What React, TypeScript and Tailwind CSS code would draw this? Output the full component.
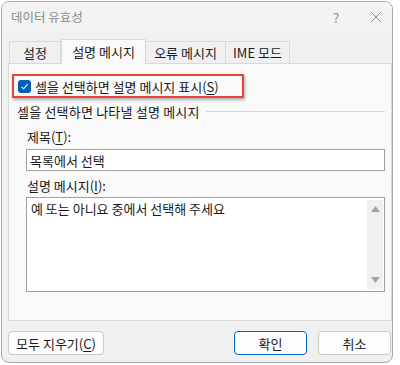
import React from "react";

const font = { fontFamily: '"Noto Sans CJK KR", "Noto Sans", sans-serif' };

function U({ children }: { children: React.ReactNode }) {
  return <span className="underline underline-offset-2">{children}</span>;
}

export default function App() {
  return (
    <div className="w-[400px] h-[365px] bg-white pl-[1px] pt-[1px]" style={font}>
      <div className="w-[392px] h-[362px] rounded-[8px] border border-[#a9a9a9] bg-[#f0f0f0] flex flex-col overflow-hidden text-[13px] text-[#1a1a1a] leading-none">
        {/* Title bar */}
        <div className="h-[30px] bg-[#f3f3f3] flex items-center pl-[9px] shrink-0">
          <span className="text-[#8c8c8c] text-[12.5px]">데이터 유효성</span>
          <span className="ml-auto text-[#8c8c8c] text-[13px] w-[20px] text-center">?</span>
          <svg className="ml-[24px] mr-[10px]" width="12" height="12" viewBox="0 0 12 12">
            <path d="M1 1 L11 11 M11 1 L1 11" stroke="#8c8c8c" strokeWidth="1" />
          </svg>
        </div>
        {/* Tabs */}
        <div className="flex items-end pl-[7px] h-[31px] shrink-0 relative z-10">
          <div className="w-[52px] h-[22px] border border-b-0 border-[#d9d9d9] bg-[#f0f0f0] flex items-center justify-center">설정</div>
          <div className="w-[85px] h-[25px] -mb-[1px] border border-b-0 border-[#d9d9d9] bg-[#f9f9f9] flex items-center justify-center pb-[2px]">설명 메시지</div>
          <div className="w-[80px] h-[22px] border border-b-0 border-l-0 border-[#d9d9d9] bg-[#f0f0f0] flex items-center justify-center">오류 메시지</div>
          <div className="w-[64px] h-[22px] border border-b-0 border-l-0 border-[#d9d9d9] bg-[#f0f0f0] flex items-center justify-center">IME 모드</div>
        </div>
        {/* Panel */}
        <div className="ml-[6px] w-[384px] h-[258px] border border-[#d9d9d9] bg-[#f9f9f9] flex flex-col shrink-0">
          <div className="mt-[10px] ml-[3px] w-[232px] h-[24px] border-2 border-[#e8413f] shadow-[1px_2px_3px_rgba(0,0,0,0.3)] flex items-center pl-[4px] gap-[4px]">
            <div className="w-[13px] h-[13px] rounded-[3px] bg-[#005fb8] flex items-center justify-center shrink-0">
              <svg width="9" height="9" viewBox="0 0 9 9">
                <path d="M1.5 4.8 L3.6 6.8 L7.6 2.2" stroke="#ffffff" strokeWidth="1.1" fill="none" />
              </svg>
            </div>
            <span>셀을 선택하면 설명 메시지 표시(<U>S</U>)</span>
          </div>
          <div className="mt-[7px] ml-[8px] flex items-center h-[12px]">
            <span className="whitespace-nowrap tracking-[0.2px]">셀을 선택하면 나타낼 설명 메시지</span>
            <div className="ml-[6px] flex-1 mr-[6px] h-px bg-[#d6d6d6]" />
          </div>
          <div className="mt-[12px] ml-[18px] h-[14px] flex items-center">
            <span>제목(<U>T</U>):</span>
          </div>
          <div className="mt-[6px] ml-[17px] w-[359px] h-[22px] bg-white border border-[#a0a0a0] flex items-center pl-[3px]">
            목록에서 선택
          </div>
          <div className="mt-[7px] ml-[18px] h-[14px] flex items-center">
            <span>설명 메시지(<U>I</U>):</span>
          </div>
          <div className="mt-[5px] ml-[17px] w-[359px] h-[95px] bg-white border border-[#a0a0a0] flex">
            <div className="flex-1 pl-[4px] pt-[4px]">예 또는 아니요 중에서 선택해 주세요</div>
            <div className="w-[16px] my-[2px] mr-[1px] bg-[#f0f0f0] flex flex-col items-center justify-between py-[6px]">
              <svg width="9" height="6" viewBox="0 0 9 6"><path d="M0 6 L4.5 0 L9 6 Z" fill="#a3a3a3" /></svg>
              <svg width="9" height="6" viewBox="0 0 9 6"><path d="M0 0 L4.5 6 L9 0 Z" fill="#a3a3a3" /></svg>
            </div>
          </div>
        </div>
        {/* Buttons */}
        <div className="flex items-center mt-[10px] pl-[6px] pr-[1px]">
          <div className="w-[96px] h-[24px] rounded-[4px] border border-[#c9c9c9] bg-[#fdfdfd] flex items-center justify-center">
            <span>모두 지우기(<U>C</U>)</span>
          </div>
          <div className="ml-auto w-[73px] h-[24px] rounded-[4px] border-[1.5px] border-[#0067c0] bg-[#fdfdfd] flex items-center justify-center">확인</div>
          <div className="ml-[11px] w-[73px] h-[24px] rounded-[4px] border border-[#c9c9c9] bg-[#fdfdfd] flex items-center justify-center">취소</div>
        </div>
      </div>
    </div>
  );
}
